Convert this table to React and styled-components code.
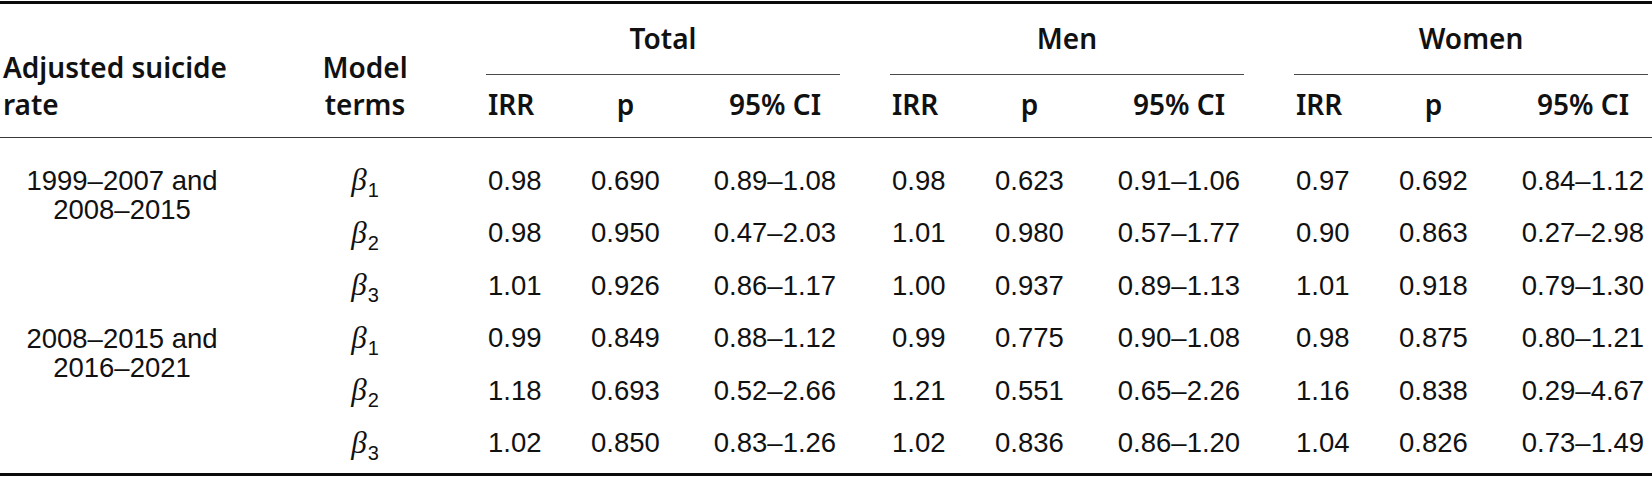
import React from "react";
import styled, { createGlobalStyle } from "styled-components";

const GlobalStyle = createGlobalStyle`
  html, body { margin: 0; padding: 0; background: #fff; }
  body { width: 1652px; height: 480px; overflow: hidden; }
`;

const Wrap = styled.div`
  width: 1652px;
  margin-top: 1px;
  border-top: 3px solid #0a0a0a;
  border-bottom: 3px solid #0a0a0a;
  color: #111;
`;

const Head = styled.div`
  display: flex;
  border-bottom: 1.5px solid #3a3a3a;
  font-family: "Noto Sans", "Open Sans", sans-serif;
  font-weight: 600;
  font-size: 28px;
  line-height: 37.5px;
`;

const HeadLabel = styled.div`
  flex: none;
  width: ${(p) => p.$w}px;
  align-self: flex-end;
  padding: 0 0 13px ${(p) => p.$pl || 0}px;
  text-align: ${(p) => p.$align};
  box-sizing: border-box;
`;

const Group = styled.div`
  flex: none;
  width: 354px;
  margin-right: ${(p) => (p.$last ? 0 : 50)}px;
`;

const GroupTitle = styled.div`
  height: 70px;
  display: flex;
  align-items: center;
  justify-content: center;
  border-bottom: 1.5px solid #4a4a4a;
`;

const SubRow = styled.div`
  display: flex;
  height: 61.5px;
  align-items: flex-end;
  padding-bottom: 13px;
  box-sizing: border-box;
`;

const Cell = styled.div`
  flex: none;
  width: ${(p) => p.$w}px;
  text-align: ${(p) => p.$align};
  padding-left: ${(p) => p.$pl || 0}px;
  box-sizing: border-box;
  white-space: nowrap;
`;

const Body = styled.div`
  padding: 17px 0 3px;
  font-family: "Liberation Sans", Arial, sans-serif;
  font-size: 27.5px;
`;

const Block = styled.div`
  display: flex;
`;

const Period = styled.div`
  flex: none;
  width: 244px;
  text-align: center;
  line-height: 29px;
  padding-top: 11.75px;
  box-sizing: border-box;
`;

const Rows = styled.div`
  display: flex;
  flex-direction: column;
`;

const Row = styled.div`
  display: flex;
  height: 52.5px;
  align-items: center;
`;

const Term = styled.div`
  flex: none;
  width: 242px;
  text-align: center;
  line-height: 30px;
`;

const DataGroup = styled.div`
  flex: none;
  display: flex;
  width: 354px;
  margin-right: ${(p) => (p.$last ? 0 : 50)}px;
`;

const Beta = styled.span`
  font-family: "Liberation Serif", "DejaVu Serif", serif;
  font-style: italic;
  font-size: 31px;
`;

const Sub = styled.sub`
  font-family: "Liberation Sans", Arial, sans-serif;
  font-style: normal;
  font-size: 20px;
  vertical-align: -7px;
  line-height: 0;
  margin-left: 1px;
`;

const groups = ["Total", "Men", "Women"];

const blocks = [
  {
    label: ["1999–2007 and", "2008–2015"],
    rows: [
      ["0.98", "0.690", "0.89–1.08", "0.98", "0.623", "0.91–1.06", "0.97", "0.692", "0.84–1.12"],
      ["0.98", "0.950", "0.47–2.03", "1.01", "0.980", "0.57–1.77", "0.90", "0.863", "0.27–2.98"],
      ["1.01", "0.926", "0.86–1.17", "1.00", "0.937", "0.89–1.13", "1.01", "0.918", "0.79–1.30"],
    ],
  },
  {
    label: ["2008–2015 and", "2016–2021"],
    rows: [
      ["0.99", "0.849", "0.88–1.12", "0.99", "0.775", "0.90–1.08", "0.98", "0.875", "0.80–1.21"],
      ["1.18", "0.693", "0.52–2.66", "1.21", "0.551", "0.65–2.26", "1.16", "0.838", "0.29–4.67"],
      ["1.02", "0.850", "0.83–1.26", "1.02", "0.836", "0.86–1.20", "1.04", "0.826", "0.73–1.49"],
    ],
  },
];

function Triple({ values }) {
  return (
    <>
      <Cell $w={100} $align="left" $pl={2}>{values[0]}</Cell>
      <Cell $w={79} $align="center">{values[1]}</Cell>
      <Cell $w={175} $align="center" $pl={45}>{values[2]}</Cell>
    </>
  );
}

export default function App() {
  return (
    <>
      <GlobalStyle />
      <Wrap>
        <Head>
          <HeadLabel $w={244} $align="left" $pl={3}>
            Adjusted suicide
            <br />
            rate
          </HeadLabel>
          <HeadLabel $w={242} $align="center">
            Model
            <br />
            terms
          </HeadLabel>
          {groups.map((g, i) => (
            <Group key={g} $last={i === groups.length - 1}>
              <GroupTitle>{g}</GroupTitle>
              <SubRow>
                <Triple values={["IRR", "p", "95% CI"]} />
              </SubRow>
            </Group>
          ))}
        </Head>
        <Body>
          {blocks.map((b, bi) => (
            <Block key={bi}>
              <Period>
                {b.label[0]}
                <br />
                {b.label[1]}
              </Period>
              <Rows>
                {b.rows.map((r, ri) => (
                  <Row key={ri}>
                    <Term>
                      <Beta>β</Beta>
                      <Sub>{ri + 1}</Sub>
                    </Term>
                    {[0, 1, 2].map((gi) => (
                      <DataGroup key={gi} $last={gi === 2}>
                        <Triple values={r.slice(gi * 3, gi * 3 + 3)} />
                      </DataGroup>
                    ))}
                  </Row>
                ))}
              </Rows>
            </Block>
          ))}
        </Body>
      </Wrap>
    </>
  );
}
